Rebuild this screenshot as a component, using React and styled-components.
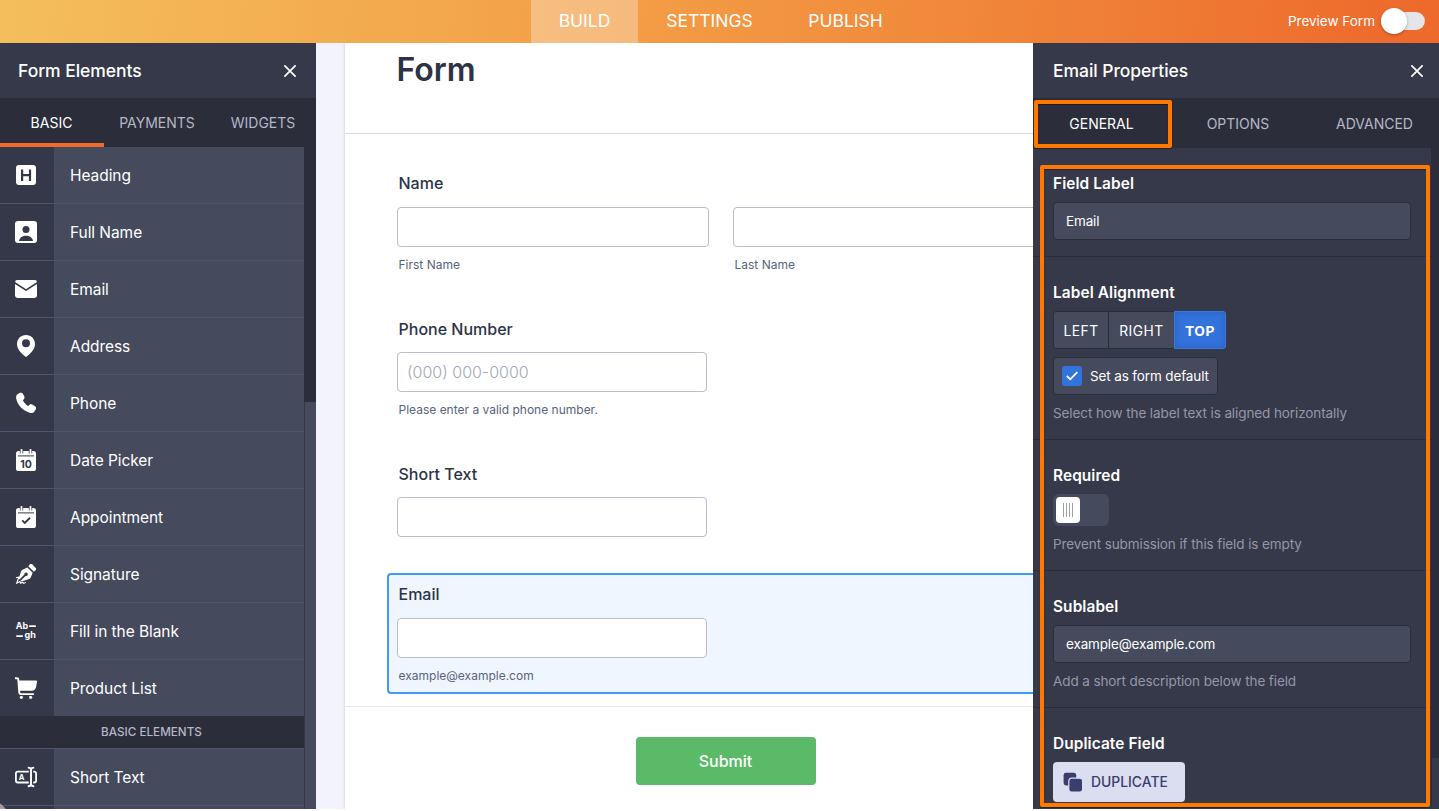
import React from 'react';
import styled, { createGlobalStyle } from 'styled-components';

const GlobalStyle = createGlobalStyle`
  * {
    box-sizing: border-box;
  }

  body {
    margin: 0;
    background: #ffffff;
    font-family: Inter, "Liberation Sans", sans-serif;
    overflow: hidden;
  }

  button, input {
    font-family: inherit;
  }
`;

const Page = styled.div`
  position: relative;
  display: flex;
  flex-direction: column;
  width: 1439px;
  height: 809px;
  overflow: hidden;
`;

/* ---------- top bar ---------- */

const TopBar = styled.header`
  display: grid;
  grid-template-columns: 531px auto 1fr;
  height: 43px;
  flex: none;
  background: linear-gradient(96deg, #f4be5c 0%, #f39c45 45%, #ed6a2c 98%);
`;

const TopNav = styled.nav`
  grid-column: 2;
  display: flex;
`;

const TopNavItem = styled.a`
  width: ${(props) => props.w}px;
  padding-bottom: 2px;
  display: flex;
  align-items: center;
  justify-content: center;
  color: white;
  font-size: 17.5px;
  white-space: nowrap;
  background: ${(props) => (props.$active ? 'rgba(255, 255, 255, .3)' : 'none')};
`;

const PreviewArea = styled.div`
  display: flex;
  align-items: center;
  justify-content: flex-end;
  padding: 0 14px 1px 0;
  color: white;
  font-size: 13.5px;
`;

const PreviewToggle = styled.div`
  width: 44px;
  height: 18px;
  margin-left: 6px;
  border-radius: 9px;
  background: #e3e5eb;
  display: flex;
  align-items: center;
`;

const PreviewKnob = styled.div`
  width: 26px;
  height: 26px;
  flex: none;
  border-radius: 50%;
  background: white;
  box-shadow: 0 1px 3px rgba(0, 0, 0, .3);
`;

const Body = styled.div`
  display: flex;
  flex: 1;
  min-height: 0;
`;

/* ---------- shared panel parts ---------- */

const Panel = styled.aside`
  position: relative;
  display: flex;
  flex-direction: column;
  flex: none;
  width: ${(props) => props.w}px;
  background: #363949;
  overflow: hidden;
`;

const PanelHeader = styled.div`
  display: flex;
  align-items: center;
  justify-content: space-between;
  flex: none;
  height: 55px;
  padding: ${(props) => (props.$right ? '0 16px 0 20px' : '0 20px 0 18px')};
  color: white;
  font-size: 17.5px;
  font-weight: 500;
  letter-spacing: -.05px;
  line-height: 20px;
`;

const TabBar = styled.div`
  display: flex;
  flex: none;
  height: ${(props) => props.h}px;
  background: #2b2d3b;
`;

const Tab = styled.div`
  flex: none;
  width: ${(props) => props.w}px;
  padding-top: ${(props) => props.$top || 4}px;
  padding-right: ${(props) => props.$shift || 0}px;
  border-bottom: 4px solid ${(props) => (props.$line ? '#f26b2c' : 'transparent')};
  display: flex;
  align-items: center;
  justify-content: center;
  color: ${(props) => (props.$active ? '#ffffff' : '#b5b7c6')};
  font-size: 14px;
`;

const PanelBody = styled.div`
  display: flex;
  flex: 1;
  min-height: 0;
`;

/* ---------- left panel ---------- */

const ElementList = styled.div`
  width: 304px;
  overflow: hidden;
`;

const ElementRow = styled.div`
  display: flex;
  height: ${(props) => (props.$first ? 56 : 57)}px;
  border-top: ${(props) => (props.$first ? 'none' : '1px solid #4f5471')};
`;

const ElementIcon = styled.div`
  width: 54px;
  padding-right: 2px;
  display: flex;
  align-items: center;
  justify-content: center;
  background: #353848;
`;

const ElementName = styled.div`
  flex: 1;
  padding-left: 16px;
  display: flex;
  align-items: center;
  background: #454a5d;
  color: white;
  font-size: 15.5px;
  letter-spacing: -.06px;
`;

const GroupTitle = styled.div`
  height: 32px;
  display: flex;
  align-items: center;
  justify-content: center;
  padding-right: 1px;
  background: #2b2d3b;
  color: #b5b7c6;
  font-size: 11.7px;
  font-weight: 500;
`;

const LeftScroll = styled.div`
  width: 12px;
  padding-top: 255px;
  background: #2b2d3b;
  display: flex;
`;

const LeftThumb = styled.div`
  flex: 1;
  background: #454a5d;
  border-left: 1px solid #353848;
`;

const Avatar = styled.div`
  position: absolute;
  left: -34px;
  top: 800px;
  width: 44px;
  height: 44px;
  border-radius: 50%;
  background: #b0959b;
`;

/* ---------- form ---------- */

const Canvas = styled.main`
  flex: 1;
  min-width: 0;
  padding-left: 29px;
  background: #f3f3fe;
  overflow: hidden;
`;

const FormSheet = styled.div`
  height: 100%;
  background: white;
  box-shadow: 0 0 3px rgba(84, 95, 150, .3);
`;

const FormTitle = styled.h1`
  height: 91px;
  margin: 0;
  padding: 6px 0 0 51.5px;
  border-bottom: 1px solid #d7d8e0;
  color: #2c3345;
  font-size: 32px;
  font-weight: 600;
  line-height: 41px;
`;

const Fields = styled.div`
  height: 573px;
  padding: 39px 0 0 52px;
  border-bottom: 1px solid #e5e6f1;
`;

const Field = styled.div`
  margin-bottom: ${(props) => props.$after || 0}px;
`;

const SelectedField = styled.div`
  margin-left: -10px;
  padding: 9px 0 8px 8px;
  border: 2px solid #4299f6;
  border-right: none;
  border-radius: 4px 0 0 4px;
  background: #eff6ff;
`;

const FieldLabel = styled.div`
  padding-left: 1.5px;
  margin-bottom: ${(props) => props.$gap || 13}px;
  color: #2c3345;
  font-size: 16px;
  font-weight: 500;
  line-height: 20px;
`;

const FieldRow = styled.div`
  display: flex;
  gap: 24px;
`;

const FieldInput = styled.input`
  display: block;
  flex: none;
  width: ${(props) => props.$w || 310}px;
  height: 40px;
  padding: 0 9px;
  border: 1px solid #b8bdc9;
  border-radius: 4px;
  background: white;
  outline: none;
  font-size: 16px;
  font-weight: 300;

  &::placeholder {
    color: #a3a9b6;
    opacity: 1;
  }
`;

const SubLabel = styled.div`
  padding: 10px 0 0 1.5px;
  color: #57647e;
  font-size: 12px;
  line-height: 16px;
`;

const SubmitArea = styled.div`
  display: flex;
  padding: 30px 0 0 291px;
`;

const SubmitButton = styled.button`
  width: 180px;
  height: 48px;
  padding: 0 1px 0 0;
  border: none;
  border-radius: 4px;
  background: #5aba68;
  color: white;
  font-size: 16px;
  font-weight: 500;
`;

/* ---------- right panel ---------- */

const Properties = styled.div`
  width: 398px;
  overflow: hidden;
`;

const Property = styled.section`
  padding: 25px 20px ${(props) => props.$bottom || 18}px;
  border-bottom: 1px solid #2b2d3b;
`;

const PropertyTitle = styled.div`
  height: 20px;
  margin-bottom: 9px;
  color: white;
  font-size: 15.4px;
  font-weight: 600;
  letter-spacing: .1px;
  line-height: 21px;
`;

const PropertyInput = styled.input`
  display: block;
  width: 358px;
  height: 38px;
  padding: 0 12px;
  border: 1px solid #2b2d3b;
  border-radius: 4px;
  background: #454a5d;
  color: white;
  outline: none;
  font-size: 13.5px;
  letter-spacing: -.15px;
`;

const Hint = styled.div`
  margin-top: 10px;
  color: #9497aa;
  font-size: 13.5px;
  letter-spacing: -.1px;
  line-height: 16px;
`;

const Segments = styled.div`
  display: flex;
  height: 38px;
`;

const Segment = styled.button`
  width: ${(props) => props.w}px;
  padding: 1px 0 0;
  border: 1px solid ${(props) => (props.$active ? '#3a78e0' : '#2b2d3b')};
  border-left-width: ${(props) => (props.$inner ? 0 : 1)}px;
  border-right-width: ${(props) => (props.$inner ? 0 : 1)}px;
  border-radius: ${(props) => props.$radius || 0};
  background: ${(props) => (props.$active ? '#3273dc' : '#454a5d')};
  box-shadow: ${(props) => (props.$active ? 'inset 0 0 6px rgba(30, 60, 130, .35)' : 'none')};
  color: white;
  font-size: 13.8px;
  font-weight: ${(props) => (props.$active ? 700 : 400)};
  letter-spacing: .5px;
`;

const DefaultBox = styled.label`
  display: flex;
  align-items: center;
  width: 165px;
  height: 38px;
  margin-top: 8px;
  padding-left: 8px;
  border: 1px solid #2b2d3b;
  border-radius: 4px;
  background: #454a5d;
  color: white;
  font-size: 13.5px;
  letter-spacing: -.13px;
  white-space: nowrap;
`;

const CheckMark = styled.span`
  display: flex;
  align-items: center;
  justify-content: center;
  width: 20px;
  height: 20px;
  margin-right: 8px;
  border-radius: 3px;
  background: #3273dc;
`;

const Switch = styled.div`
  width: 56px;
  height: 32px;
  padding: 3px;
  border-radius: 6px;
  background: #454a5d;
`;

const SwitchKnob = styled.div`
  display: flex;
  align-items: center;
  justify-content: center;
  gap: 2px;
  width: 24px;
  height: 26px;
  border-radius: 4px;
  background: white;
`;

const Grip = styled.span`
  width: 1px;
  height: 14px;
  background: #9b9fb0;
`;

const DuplicateButton = styled.button`
  display: flex;
  align-items: center;
  gap: 8px;
  width: 132px;
  height: 40px;
  padding: 0 0 1px 10px;
  border: none;
  border-radius: 4px;
  background: #dbddf1;
  color: #393e6c;
  font-size: 13.9px;
  font-weight: 500;
`;

const RightScroll = styled.div`
  flex: 1;
  padding-top: 610px;
  background: #2b2d3b;
  display: flex;
`;

const RightThumb = styled.div`
  flex: 1;
  margin-left: 1px;
  background: #363949;
`;

const Highlight = styled.div`
  position: absolute;
  left: ${(props) => props.x}px;
  top: ${(props) => props.y}px;
  width: ${(props) => props.w}px;
  height: ${(props) => props.h}px;
  border: 4px solid #ff7800;
  border-radius: 2px;
  box-shadow: 0 1px 1px rgba(0, 0, 0, .4), inset 0 1px 1px rgba(0, 0, 0, .4);
  pointer-events: none;
`;

/* ---------- icons ---------- */

const DARK = '#353848';

const Svg = ({ children, size = 22 }) => (
  <svg width={size} height={size} viewBox={`0 0 ${size} ${size}`} fill="white">
    {children}
  </svg>
);

const CloseIcon = () => (
  <svg width="12" height="12" viewBox="0 0 12 12" fill="none" stroke="white" strokeWidth="1.7" strokeLinecap="round">
    <path d="M.9 .9L11.1 11.1M11.1 .9L.9 11.1" />
  </svg>
);

const CalendarBase = () => (
  <>
    <rect x="1" y="2" width="20" height="20" rx="2.6" />
    <path d="M3 6.9H19" stroke={DARK} strokeWidth="1" />
    <path d="M6.5 1V4.4M15.5 1V4.4" stroke={DARK} strokeWidth="3.4" />
    <path d="M6.5 .9V4.6M15.5 .9V4.6" stroke="white" strokeWidth="1.9" strokeLinecap="round" />
  </>
);

const icons = {
  heading: (
    <Svg>
      <rect x="1" y="1" width="20" height="20" rx="3" />
      <path d="M7.1 5.5V17M15 5.5V17M7.1 11.2H15" stroke={DARK} strokeWidth="2.2" fill="none" />
    </Svg>
  ),
  person: (
    <Svg>
      <rect width="22" height="22" rx="3" />
      <circle cx="11" cy="8.4" r="3.5" fill={DARK} />
      <path d="M4 20C4.6 16.6 7.6 14.8 11 14.8S17.4 16.6 18 20Z" fill={DARK} />
    </Svg>
  ),
  mail: (
    <Svg>
      <rect y="2" width="22" height="18" rx="2.4" />
      <path d="M-.5 4.7L11 12.1L22.5 4.7" stroke={DARK} strokeWidth="1.7" fill="none" />
    </Svg>
  ),
  pin: (
    <Svg>
      <path fillRule="evenodd" d="M11 0C5.9 0 2 3.9 2 9C2 14.4 6.4 18.6 11 22C15.6 18.6 20 14.4 20 9C20 3.9 16.1 0 11 0ZM11 4.2A4 4 0 1 1 11 12.2A4 4 0 1 1 11 4.2Z" />
    </Svg>
  ),
  phone: (
    <Svg>
      <path d="M2.5 2.2L4.6 1C6 .4 7.3 .9 8 2.1L9.2 4.2C9.9 5.6 9.4 7 7.9 8.3C8.9 10.6 10.9 12.9 13.3 14.2C14.4 12.3 16 11.9 17.6 12.8L19.7 14C21 14.8 21.4 16.1 20.8 17.3L19.4 19.5C18.2 21.1 16.5 21.3 14.8 20.8C7.5 18.5 2.5 13 1.2 6.5C.9 4.8 1.2 3.2 2.5 2.2Z" />
    </Svg>
  ),
  date: (
    <Svg>
      <CalendarBase />
      <text x="11" y="18.8" textAnchor="middle" fontSize="10.5" fontWeight="700" fill={DARK}>10</text>
    </Svg>
  ),
  appointment: (
    <Svg>
      <CalendarBase />
      <path d="M7.2 14.4L9.8 16.9L15 11.8" stroke={DARK} strokeWidth="1.9" fill="none" />
    </Svg>
  ),
  signature: (
    <Svg>
      <path d="M15.2 1.3C15.8 .8 16.4 .8 17 1.3L20.8 5.1C21.3 5.7 21.3 6.3 20.8 6.9L18.9 8.7L13.3 3.2Z" />
      <path d="M12.3 4.5L17.7 9.8L15.6 14.8C15.3 15.5 14.8 15.9 14.1 16.1L6.7 18.6L5.6 17.8L10.6 12.9A1.7 1.7 0 1 0 9.4 11.6L4.5 16.6L3.8 15.4L6.1 8.3C6.3 7.6 6.8 7 7.5 6.7Z" />
      <path d="M1 14.7L4 14L1.7 20.2L5 18.6L5.5 20.3L7.6 19.2L8.5 20.4L10.8 19.6" fill="none" stroke="white" strokeWidth="1.1" />
    </Svg>
  ),
  blank: (
    <Svg>
      <text x=".8" y="9" fontSize="9" fontWeight="700">Ab</text>
      <path d="M14.2 6.1H20.8M1.3 16.1H7.8" stroke="white" strokeWidth="1.8" />
      <text x="9.5" y="18.1" fontSize="9" fontWeight="700">gh</text>
    </Svg>
  ),
  cart: (
    <Svg>
      <path d="M.5 1.2H2.2C2.8 1.2 3.1 1.5 3.2 2L4.3 15.6C4.4 16.6 4.9 17.1 5.8 17.1H18.2" fill="none" stroke="white" strokeWidth="1.9" strokeLinecap="round" />
      <path d="M3.3 3.4H21C21.8 3.4 22.1 3.8 22 4.5L21.2 9.6C20.7 12.4 19.2 13.8 16.8 13.8H4.2Z" />
      <circle cx="6.4" cy="20.3" r="1.6" />
      <circle cx="15.6" cy="20.3" r="1.6" />
    </Svg>
  ),
  short: (
    <Svg>
      <rect x=".9" y="5.6" width="20.2" height="10.9" rx="2" fill="none" stroke="white" strokeWidth="1.8" />
      <path d="M16 3.5V18.5" stroke={DARK} strokeWidth="4.4" />
      <path d="M12.8 1.6C14.8 1.6 16 2.2 16 3.8V18C16 19.6 14.8 20.3 12.8 20.3M19.2 1.6C17.2 1.6 16 2.2 16 3.8M16 18C16 19.6 17.2 20.3 19.2 20.3" fill="none" stroke="white" strokeWidth="1.9" />
      <text x="3.8" y="13.8" fontSize="7.6" fontWeight="700">A</text>
    </Svg>
  ),
};

const DuplicateIcon = () => (
  <svg width="20" height="20" viewBox="0 0 20 20" fill="#393e6c">
    <rect x=".6" y=".8" width="12.6" height="12.6" rx="2.4" />
    <rect x="5.8" y="6.2" width="13.8" height="13.8" rx="2.8" stroke="#dbddf1" strokeWidth="1.2" />
  </svg>
);

const elements = [
  { name: 'Heading', icon: 'heading' },
  { name: 'Full Name', icon: 'person' },
  { name: 'Email', icon: 'mail' },
  { name: 'Address', icon: 'pin' },
  { name: 'Phone', icon: 'phone' },
  { name: 'Date Picker', icon: 'date' },
  { name: 'Appointment', icon: 'appointment' },
  { name: 'Signature', icon: 'signature' },
  { name: 'Fill in the Blank', icon: 'blank' },
  { name: 'Product List', icon: 'cart' },
];

const ElementItem = ({ name, icon, first }) => (
  <ElementRow $first={first}>
    <ElementIcon>{icons[icon]}</ElementIcon>
    <ElementName>{name}</ElementName>
  </ElementRow>
);

const ElementsPanel = () => (
  <Panel w={316}>
    <PanelHeader>
      Form Elements
      <CloseIcon />
    </PanelHeader>
    <TabBar h={49}>
      <Tab w={104} $active $line $shift={1}>BASIC</Tab>
      <Tab w={106}>PAYMENTS</Tab>
      <Tab w={106}>WIDGETS</Tab>
    </TabBar>
    <PanelBody>
      <ElementList>
        {elements.map((el, i) => (
          <ElementItem key={el.name} name={el.name} icon={el.icon} first={i === 0} />
        ))}
        <GroupTitle>BASIC ELEMENTS</GroupTitle>
        <ElementItem name="Short Text" icon="short" />
        <ElementItem name="" />
      </ElementList>
      <LeftScroll>
        <LeftThumb />
      </LeftScroll>
    </PanelBody>
  </Panel>
);

const FormCanvas = () => (
  <Canvas>
    <FormSheet>
      <FormTitle>Form</FormTitle>
      <Fields>
        <Field $after={46}>
          <FieldLabel $gap={14}>Name</FieldLabel>
          <FieldRow>
            <div>
              <FieldInput $w={312} />
              <SubLabel>First Name</SubLabel>
            </div>
            <div>
              <FieldInput $w={312} />
              <SubLabel>Last Name</SubLabel>
            </div>
          </FieldRow>
        </Field>
        <Field $after={46}>
          <FieldLabel>Phone Number</FieldLabel>
          <FieldInput placeholder="(000) 000-0000" />
          <SubLabel>Please enter a valid phone number.</SubLabel>
        </Field>
        <Field $after={36}>
          <FieldLabel>Short Text</FieldLabel>
          <FieldInput />
        </Field>
        <SelectedField>
          <FieldLabel $gap={14}>Email</FieldLabel>
          <FieldInput />
          <SubLabel>example@example.com</SubLabel>
        </SelectedField>
      </Fields>
      <SubmitArea>
        <SubmitButton>Submit</SubmitButton>
      </SubmitArea>
    </FormSheet>
  </Canvas>
);

const PropertiesPanel = () => (
  <Panel w={406}>
    <PanelHeader $right>
      Email Properties
      <CloseIcon />
    </PanelHeader>
    <TabBar h={50}>
      <Tab w={137} $top={5} $active>GENERAL</Tab>
      <Tab w={136} $top={5}>OPTIONS</Tab>
      <Tab w={137} $top={5}>ADVANCED</Tab>
    </TabBar>
    <PanelBody>
      <Properties>
        <Property $bottom={16}>
          <PropertyTitle>Field Label</PropertyTitle>
          <PropertyInput defaultValue="Email" />
        </Property>
        <Property>
          <PropertyTitle>Label Alignment</PropertyTitle>
          <Segments>
            <Segment w={56} $radius="3px 0 0 3px">LEFT</Segment>
            <Segment w={65} $inner>RIGHT</Segment>
            <Segment w={52} $active $radius="0 3px 3px 0">TOP</Segment>
          </Segments>
          <DefaultBox>
            <CheckMark>
              <svg width="12" height="10" viewBox="0 0 12 10" fill="none" stroke="white" strokeWidth="1.8">
                <path d="M.8 5L4.3 8.3L11.3 1.2" />
              </svg>
            </CheckMark>
            Set as form default
          </DefaultBox>
          <Hint>Select how the label text is aligned horizontally</Hint>
        </Property>
        <Property>
          <PropertyTitle>Required</PropertyTitle>
          <Switch>
            <SwitchKnob>
              <Grip />
              <Grip />
              <Grip />
              <Grip />
            </SwitchKnob>
          </Switch>
          <Hint>Prevent submission if this field is empty</Hint>
        </Property>
        <Property>
          <PropertyTitle>Sublabel</PropertyTitle>
          <PropertyInput defaultValue="example@example.com" />
          <Hint>Add a short description below the field</Hint>
        </Property>
        <Property>
          <PropertyTitle>Duplicate Field</PropertyTitle>
          <DuplicateButton>
            <DuplicateIcon />
            DUPLICATE
          </DuplicateButton>
        </Property>
      </Properties>
      <RightScroll>
        <RightThumb />
      </RightScroll>
    </PanelBody>
    <Highlight x={1} y={57} w={138} h={48} />
    <Highlight x={7} y={122} w={390} h={642} />
  </Panel>
);

const App = () => (
  <>
    <GlobalStyle />
    <Page>
      <TopBar>
        <TopNav>
          <TopNavItem w={107} $active>BUILD</TopNavItem>
          <TopNavItem w={143}>SETTINGS</TopNavItem>
          <TopNavItem w={129}>PUBLISH</TopNavItem>
        </TopNav>
        <PreviewArea>
          Preview Form
          <PreviewToggle>
            <PreviewKnob />
          </PreviewToggle>
        </PreviewArea>
      </TopBar>
      <Body>
        <ElementsPanel />
        <FormCanvas />
        <PropertiesPanel />
      </Body>
      <Avatar />
    </Page>
  </>
);

export default App;
